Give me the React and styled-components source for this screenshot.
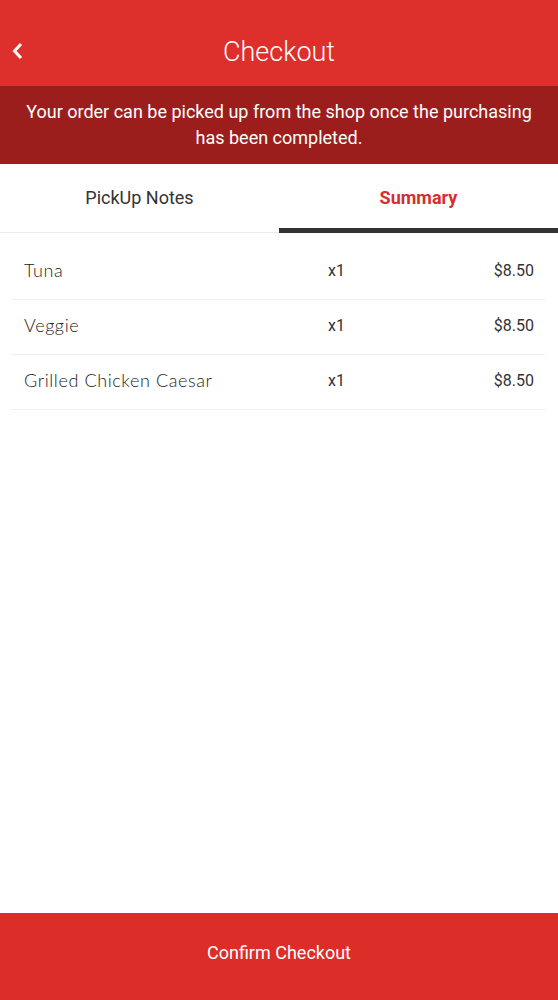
import React from "react";
import styled, { createGlobalStyle } from "styled-components";

const Global = createGlobalStyle`
  html, body { margin: 0; padding: 0; background: #fff; }
  body { font-family: Roboto, "Liberation Sans", sans-serif; }
  * { box-sizing: border-box; }
`;

const Page = styled.div`
  width: 558px;
  height: 1000px;
  display: flex;
  flex-direction: column;
  background: #fff;
`;

const Header = styled.header`
  height: 86px;
  background: #dd2f2b;
  display: flex;
  align-items: center;
  justify-content: center;
  padding-top: 17px;
  position: relative;
`;

const BackButton = styled.button`
  position: absolute;
  left: 6px;
  top: 37px;
  width: 24px;
  height: 28px;
  border: 0;
  background: transparent;
  padding: 0;
  display: flex;
  align-items: center;
  justify-content: center;
`;

const Title = styled.h1`
  margin: 0;
  font-family: Roboto, sans-serif;
  font-weight: 300;
  font-size: 27px;
  color: #fff;
`;

const Banner = styled.div`
  height: 78px;
  background: #9b1e1c;
  color: #fff;
  font-family: Roboto, sans-serif;
  font-size: 18px;
  line-height: 26px;
  text-align: center;
  padding: 13px 16px 0;
`;

const Tabs = styled.div`
  height: 69px;
  display: flex;
  border-bottom: 1px solid #ececec;
`;

const Tab = styled.div`
  flex: 1;
  display: flex;
  align-items: center;
  justify-content: center;
  padding-top: 2px;
  font-family: Roboto, sans-serif;
  font-size: 18px;
  font-weight: ${(p) => (p.$active ? 700 : 400)};
  color: ${(p) => (p.$active ? "#d32f2f" : "#333")};
  border-bottom: 5px solid ${(p) => (p.$active ? "#333" : "transparent")};
  margin-bottom: -1px;
`;

const List = styled.div`
  flex: 1;
  padding: 12px 13px 0 11px;
`;

const Row = styled.div`
  height: 55px;
  display: grid;
  grid-template-columns: 1fr 60px 150px;
  align-items: center;
  padding: 0 11px 4px 13px;
  border-bottom: 1px solid #f0f0f0;
`;

const Name = styled.span`
  font-family: Lato, "Open Sans", sans-serif;
  font-weight: 300;
  font-size: 18px;
  color: #222;
  letter-spacing: 0.6px;
`;

const Qty = styled.span`
  font-family: Roboto, sans-serif;
  font-size: 16px;
  color: #333;
  padding-left: 4px;
`;

const Price = styled.span`
  font-family: Roboto, sans-serif;
  font-size: 16px;
  color: #333;
  text-align: right;
`;

const Footer = styled.div`
  height: 92px;
  padding-top: 5px;
  background: linear-gradient(#fff, #f3eeee);
  display: flex;
`;

const ConfirmButton = styled.button`
  flex: 1;
  border: 0;
  background: #dc2d28;
  color: #fff;
  font-family: Roboto, sans-serif;
  font-size: 18px;
  padding: 0 0 8px;
  display: flex;
  align-items: center;
  justify-content: center;
`;

const items = [
  { name: "Tuna", qty: 1, price: "$8.50" },
  { name: "Veggie", qty: 1, price: "$8.50" },
  { name: "Grilled Chicken Caesar", qty: 1, price: "$8.50" },
];

export default function App() {
  return (
    <>
      <Global />
      <Page>
        <Header>
          <BackButton aria-label="Back">
            <svg width="14" height="18" viewBox="0 0 14 18">
              <path d="M10 2 L3.5 9 L10 16" fill="none" stroke="#fff" strokeWidth="3" strokeLinecap="butt" strokeLinejoin="miter" />
            </svg>
          </BackButton>
          <Title>Checkout</Title>
        </Header>
        <Banner>
          Your order can be picked up from the shop once the purchasing has been completed.
        </Banner>
        <Tabs>
          <Tab>PickUp Notes</Tab>
          <Tab $active>Summary</Tab>
        </Tabs>
        <List>
          {items.map((it) => (
            <Row key={it.name}>
              <Name>{it.name}</Name>
              <Qty>x{it.qty}</Qty>
              <Price>{it.price}</Price>
            </Row>
          ))}
        </List>
        <Footer>
          <ConfirmButton>Confirm Checkout</ConfirmButton>
        </Footer>
      </Page>
    </>
  );
}
